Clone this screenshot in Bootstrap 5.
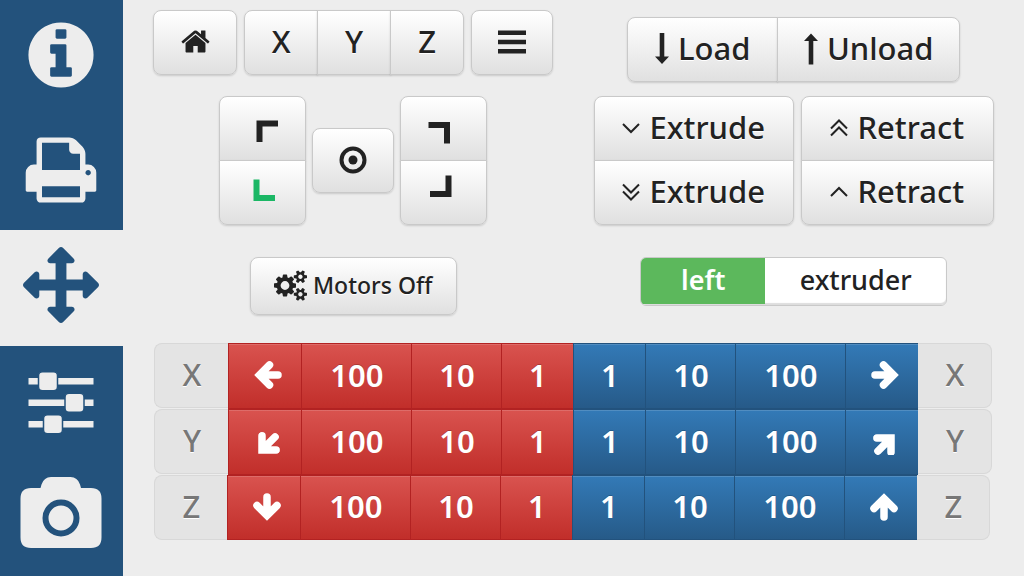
<!DOCTYPE html>
<html lang="en">
<head>
<meta charset="utf-8">
<meta name="viewport" content="width=device-width, initial-scale=1">
<title>Printer control</title>
<link href="https://cdn.jsdelivr.net/npm/bootstrap@5.3.0/dist/css/bootstrap.min.css" rel="stylesheet">
<style>
  body { background: #ededed; color: #222; font-family: "Noto Sans", sans-serif; }
  svg { display: block; flex: none; fill: currentColor; }

  /* side navigation */
  .side-nav { width: 12%; background: #23527c; }
  .side-nav a { flex: 1 1 0; color: #ededed; padding-bottom: 6px; }
  .side-nav a.active { background: #ededed; color: #23527c; }

  .panel { padding: 10px 10px 0; }
  .upper { min-height: 333px; }
  .left-stack > * + * { margin-top: 32px; }
  .left-stack > .corners { margin-top: 21px; }
  .right-stack { padding-top: 7px; }
  .right-stack > * + * { margin-top: 32px; }
  .right-stack > .feed { margin-top: 14px; }
  .gap-6 { gap: 6px; }
  .gap-7 { gap: 7px; }

  /* light gradient buttons */
  .pad {
    --bs-btn-border-radius: 8px;
    --bs-btn-border-color: #c9c9c9;
    --bs-btn-hover-border-color: #bbb;
    --bs-btn-color: #222;
    --bs-btn-font-size: 31px;
    --bs-btn-line-height: 1;
    --bs-btn-padding-x: 0;
    --bs-btn-padding-y: 0;
    display: inline-flex; align-items: center; justify-content: center;
    height: 65px; padding-bottom: 2px; font-weight: 500;
    background: linear-gradient(#fff, #e0e0e0);
    text-shadow: 0 1px 0 #fff;
    box-shadow: 0 1px 2px rgba(0, 0, 0, .15);
  }
  .w-key { width: 82px; }
  .w-home { width: 84px; }
  .w-axis { min-width: 74px; }
  .w-corner { width: 87px; }
  .w-extrude { width: 200px; }
  .w-retract { width: 193px; }
  .w-load { width: 151px; }
  .w-unload { width: 183px; }
  .word { gap: 9px; }
  .motors { height: 58px; width: 207px; font-size: 23px; gap: 6px; }
  .done { color: #1bb765; }

  /* extruder switch */
  .switcher {
    width: 307px; height: 49px; border: 1px solid #c9c9c9; border-radius: 6px;
    background: #fff; overflow: hidden; font-size: 27px; line-height: 44px; font-weight: 500;
    box-shadow: inset 0 -2px 1px #ddd; cursor: pointer;
  }
  .switcher .on { width: 124px; height: 46px; background: #5cb85c; color: #fff; font-weight: 600; }

  /* jog rows */
  .jog { width: 838px; max-width: 100%; margin: 0 auto; }
  .jog .pad { height: 66px; border-radius: 0; box-shadow: inset 0 1px 0 rgba(255, 255, 255, .15); }
  .jog .neg, .jog .pos { color: #fff; font-weight: 600; border-right-width: 0; }
  .jog .neg {
    --bs-btn-border-color: #b22222;
    background: linear-gradient(#d9534f, #c12e2a); text-shadow: 0 -1px 0 rgba(0, 0, 0, .2);
  }
  .jog .pos {
    --bs-btn-border-color: #22527d;
    background: linear-gradient(#337ab7, #265a88); text-shadow: 0 -1px 0 rgba(0, 0, 0, .2);
  }
  .jog .axis-tag {
    --bs-btn-disabled-color: #777; --bs-btn-disabled-border-color: #d8d8d8; --bs-btn-disabled-opacity: 1;
    width: 74px; height: 65px; background: #e4e4e4; box-shadow: none;
  }
  .jog .axis-tag:first-child { border-radius: 8px 0 0 8px; border-right: 0; }
  .jog .axis-tag:last-child { border-radius: 0 8px 8px 0; border-left: 0; }
  .jog .short .axis-tag { width: 73px; }
  .jog .short .pad { height: 65px; }
  .jog .s-dir { width: 73px; padding-left: 5px; }
  .s-100 { width: 110px; }
  .s-10 { width: 90px; }
  .s-1 { width: 72px; }
</style>
</head>
<body>
<svg width="0" height="0" class="position-absolute" aria-hidden="true">
  <symbol id="arrow" viewBox="0 0 28 28">
    <path d="M15.500 4L5.500 14l10 10M7 14h17" fill="none" stroke="currentColor" stroke-width="7.500" stroke-linecap="round"/>
  </symbol>
  <symbol id="chevron" viewBox="0 0 18 18"><path d="M1 5l8 8 8-8" fill="none" stroke="currentColor" stroke-width="2"/></symbol>
  <symbol id="chevrons" viewBox="0 0 18 18"><path d="M1 1.500l8 8 8-8M1 8.500l8 8 8-8" fill="none" stroke="currentColor" stroke-width="2"/></symbol>
</svg>

<div class="d-flex min-vh-100">
  <nav class="side-nav d-flex flex-column flex-shrink-0" aria-label="Main">
    <a href="#info" aria-label="Info" class="d-flex align-items-center justify-content-center">
      <svg width="76" height="76" viewBox="0 0 1792 1792"><path d="M1152 1376v-160q0-14-9-23t-23-9h-96v-512q0-14-9-23t-23-9h-320q-14 0-23 9t-9 23v160q0 14 9 23t23 9h96v320h-96q-14 0-23 9t-9 23v160q0 14 9 23t23 9h448q14 0 23-9t9-23zm-128-896v-160q0-14-9-23t-23-9h-192q-14 0-23 9t-9 23v160q0 14 9 23t23 9h192q14 0 23-9t9-23zm640 416q0 209-103 385.500t-279.500 279.500-385.500 103-385.500-103-279.500-279.500-103-385.500 103-385.500 279.500-279.500 385.500-103 385.500 103 279.500 279.500 103 385.500z"/></svg>
    </a>
    <a href="#print" aria-label="Print" class="d-flex align-items-center justify-content-center">
      <svg width="76" height="76" viewBox="0 0 1792 1792"><path d="M448 1536h896v-256h-896v256zm0-640h896v-384h-160q-40 0-68-28t-28-68v-160h-640v640zm1152 64q0-26-19-45t-45-19-45 19-19 45 19 45 45 19 45-19 19-45zm128 0v416q0 13-9.500 22.500t-22.500 9.500h-224v160q0 40-28 68t-68 28h-960q-40 0-68-28t-28-68v-160h-224q-13 0-22.500-9.500t-9.500-22.500v-416q0-79 56.500-135.500t135.500-56.500h64v-544q0-40 28-68t68-28h672q40 0 88 20t76 48l152 152q28 28 48 76t20 88v256h64q79 0 135.500 56.500t56.500 135.500z"/></svg>
    </a>
    <a href="#move" aria-label="Move" aria-current="page" class="active d-flex align-items-center justify-content-center">
      <svg width="76" height="76" viewBox="0 0 1792 1792"><path d="M1792 896q0 26-19 45l-256 256q-19 19-45 19t-45-19-19-45v-128h-384v384h128q26 0 45 19t19 45-19 45l-256 256q-19 19-45 19t-45-19l-256-256q-19-19-19-45t19-45 45-19h128v-384h-384v128q0 26-19 45t-45 19-45-19l-256-256q-19-19-19-45t19-45l256-256q19-19 45-19t45 19 19 45v128h384v-384h-128q-26 0-45-19t-19-45 19-45l256-256q19-19 45-19t45 19l256 256q19 19 19 45t-19 45-45 19h-128v384h384v-128q0-26 19-45t45-19 45 19l256 256q19 19 19 45z"/></svg>
    </a>
    <a href="#settings" aria-label="Settings" class="d-flex align-items-center justify-content-center">
      <svg width="76" height="76" viewBox="0 0 76 76"><path d="M5.500 16h65v6.500h-65zM5.500 37.500h65V44h-65zM5.500 59h65v6.500h-65z"/><g stroke="#23527c" stroke-width="1.500"><rect x="15.500" y="9.800" width="19" height="19" rx="4"/><rect x="42" y="31.300" width="19" height="19" rx="4"/><rect x="20.500" y="52.800" width="19" height="19" rx="4"/></g></svg>
    </a>
    <a href="#camera" aria-label="Camera" class="d-flex align-items-center justify-content-center">
      <svg width="82" height="76" viewBox="-3 0 82 76"><path d="M8 11h9.500l1-3.500Q21 0 28 0h19.500q7 0 9.500 7.500l1 3.500h10q10.500 0 10.500 10.500v39Q78.500 71 68 71H8Q-2.500 71-2.500 60.500v-39Q-2.500 11 8 11z"/><circle cx="38" cy="41" r="15.500" fill="none" stroke="#23527c" stroke-width="6"/></svg>
    </a>
  </nav>

  <main class="panel flex-grow-1">
    <div class="row g-0 upper">
      <div class="col-6 left-stack d-flex flex-column align-items-center">
        <div class="d-flex gap-7">
          <button type="button" class="btn pad w-home" aria-label="Home all">
            <svg width="31" height="31" viewBox="0 0 1792 1792"><path d="M1472 992v480q0 26-19 45t-45 19h-384v-384h-256v384h-384q-26 0-45-19t-19-45v-480q0-1 .5-3t.5-3l575-474 575 474q1 2 1 6zm223-69l-62 74q-8 9-21 11h-3q-13 0-21-7l-692-577-692 577q-12 8-24 7-13-2-21-11l-62-74q-8-10-7-23.500t11-21.500l719-599q32-26 76-26t76 26l244 204v-195q0-14 9-23t23-9h192q14 0 23 9t9 23v408l219 182q10 8 11 21.500t-7 23.500z"/></svg>
          </button>
          <div class="btn-group" role="group" aria-label="Home axis">
            <button type="button" class="btn pad w-axis">X</button>
            <button type="button" class="btn pad w-axis">Y</button>
            <button type="button" class="btn pad w-axis">Z</button>
          </div>
          <button type="button" class="btn pad w-key" aria-label="Menu">
            <svg width="28" height="28" viewBox="0 0 28 28"><path d="M0 2.500h28V7H0zM0 11.700h28v4.500H0zM0 21h28v4.500H0z"/></svg>
          </button>
        </div>

        <div class="corners d-flex gap-6 align-items-center">
          <div class="btn-group-vertical w-corner" role="group" aria-label="Left corners">
            <button type="button" class="btn pad" aria-label="Back left"><svg width="40" height="40" viewBox="-4 -4 40 40"><path d="M9.500 8.500H31v6H15.500V30h-6z"/></svg></button>
            <button type="button" class="btn pad done" aria-label="Front left"><svg width="40" height="40" viewBox="-4 -4 40 40"><path d="M6.500 3.500h6V19H28v6H6.500z"/></svg></button>
          </div>
          <button type="button" class="btn pad w-key" aria-label="Centre"><svg width="28" height="28" viewBox="0 0 28 28"><circle cx="14" cy="14" r="11.500" fill="none" stroke="currentColor" stroke-width="4"/><circle cx="14" cy="14" r="4.500"/></svg></button>
          <div class="btn-group-vertical w-corner" role="group" aria-label="Right corners">
            <button type="button" class="btn pad" aria-label="Back right"><svg width="40" height="40" viewBox="-4 -4 40 40"><path d="M.5 10H22v21.500h-6V16H.5z"/></svg></button>
            <button type="button" class="btn pad" aria-label="Front right"><svg width="40" height="40" viewBox="-4 -4 40 40"><path d="M17.500-.5h6V21H2v-6h15.500z"/></svg></button>
          </div>
        </div>

        <button type="button" class="btn pad motors">
          <svg width="33" height="31" viewBox="-64 0 1920 1792"><path d="M832 896q0-106-75-181t-181-75-181 75-75 181 75 181 181 75 181-75 75-181zm768 512q0-52-38-90t-90-38-90 38-38 90q0 53 37.500 90.500t90.500 37.500 90.500-37.500 37.500-90.500zm0-1024q0-52-38-90t-90-38-90 38-38 90q0 53 37.500 90.500t90.500 37.500 90.500-37.500 37.500-90.500zm-384 421v185q0 10-7 19.500t-16 10.500l-155 24q-11 35-32 76 34 48 90 115 7 11 7 20 0 12-7 19-23 30-82.500 89.500t-78.500 59.500q-11 0-21-7l-115-90q-37 19-77 31-11 108-23 155-7 24-30 24h-186q-11 0-20-7.500t-10-17.500l-23-153q-34-10-75-31l-118 89q-7 7-20 7-11 0-21-8-144-133-144-160 0-9 7-19 10-14 41-53t47-61q-23-44-35-82l-152-24q-10-1-17-9.500t-7-19.500v-185q0-10 7-19.500t16-10.500l155-24q11-35 32-76-34-48-90-115-7-11-7-20 0-12 7-20 22-30 82-89t79-59q11 0 21 7l115 90q34-18 77-32 11-108 23-154 7-24 30-24h186q11 0 20 7.500t10 17.500l23 153q34 10 75 31l118-89q8-7 20-7 11 0 21 8 144 133 144 160 0 8-7 19-12 16-42 54t-45 60q23 48 34 82l152 23q10 2 17 10.500t7 19.500zm640 533v140q0 16-149 31-12 27-30 52 51 113 51 138 0 4-4 7-122 71-124 71-8 0-46-47t-52-68q-20 2-30 2t-30-2q-14 21-52 68t-46 47q-2 0-124-71-4-3-4-7 0-25 51-138-18-25-30-52-149-15-149-31v-140q0-16 149-31 13-29 30-52-51-113-51-138 0-4 4-7 4-2 35-20t59-34 30-16q8 0 46 46.500t52 67.500q20-2 30-2t30 2q51-71 92-112l6-2q4 0 124 70 4 3 4 7 0 25-51 138 17 23 30 52 149 15 149 31zm0-1024v140q0 16-149 31-12 27-30 52 51 113 51 138 0 4-4 7-122 71-124 71-8 0-46-47t-52-68q-20 2-30 2t-30-2q-14 21-52 68t-46 47q-2 0-124-71-4-3-4-7 0-25 51-138-18-25-30-52-149-15-149-31v-140q0-16 149-31 13-29 30-52-51-113-51-138 0-4 4-7 4-2 35-20t59-34 30-16q8 0 46 46.500t52 67.500q20-2 30-2t30 2q51-71 92-112l6-2q4 0 124 70 4 3 4 7 0 25-51 138 17 23 30 52 149 15 149 31z"/></svg>
          Motors Off
        </button>
      </div>

      <div class="col-6 right-stack d-flex flex-column align-items-center">
        <div class="btn-group" role="group" aria-label="Filament">
          <button type="button" class="btn pad word w-load"><svg width="14" height="32" viewBox="0 0 14 32"><path d="M4.700 0h4.600v23.500H14L7 31 0 23.500h4.700z"/></svg>Load</button>
          <button type="button" class="btn pad word w-unload"><svg width="14" height="32" viewBox="0 0 14 32"><path d="M4.700 31.500h4.600V8H14L7 .5 0 8h4.700z"/></svg>Unload</button>
        </div>

        <div class="feed d-flex gap-7">
          <div class="btn-group-vertical w-extrude" role="group" aria-label="Extrude">
            <button type="button" class="btn pad word"><svg width="18" height="18"><use href="#chevron"/></svg>Extrude</button>
            <button type="button" class="btn pad word"><svg width="18" height="18"><use href="#chevrons"/></svg>Extrude</button>
          </div>
          <div class="btn-group-vertical w-retract" role="group" aria-label="Retract">
            <button type="button" class="btn pad word"><svg width="18" height="18"><use href="#chevrons" transform="rotate(180 9 9)"/></svg>Retract</button>
            <button type="button" class="btn pad word"><svg width="18" height="18"><use href="#chevron" transform="rotate(180 9 9)"/></svg>Retract</button>
          </div>
        </div>

        <div>
          <input type="checkbox" class="btn-check" id="extruder" role="switch" checked>
          <label class="switcher d-flex text-center" for="extruder"><span class="on">left</span><span class="flex-grow-1">extruder</span></label>
        </div>
      </div>
    </div>

    <div class="jog">
      <div class="d-flex" role="group" aria-label="Move X">
        <button type="button" class="btn pad axis-tag" disabled>X</button>
        <button type="button" class="btn pad neg s-dir" aria-label="X minus"><svg width="28" height="28"><use href="#arrow"/></svg></button>
        <button type="button" class="btn pad neg s-100">100</button>
        <button type="button" class="btn pad neg s-10">10</button>
        <button type="button" class="btn pad neg s-1">1</button>
        <button type="button" class="btn pad pos s-1">1</button>
        <button type="button" class="btn pad pos s-10">10</button>
        <button type="button" class="btn pad pos s-100">100</button>
        <button type="button" class="btn pad pos s-dir" aria-label="X plus"><svg width="28" height="28"><use href="#arrow" transform="rotate(180 14 14)"/></svg></button>
        <button type="button" class="btn pad axis-tag" disabled>X</button>
      </div>
      <div class="d-flex" role="group" aria-label="Move Y">
        <button type="button" class="btn pad axis-tag" disabled>Y</button>
        <button type="button" class="btn pad neg s-dir" aria-label="Y minus"><svg width="28" height="28"><use href="#arrow" transform="translate(0 3) rotate(-45 14 14)"/></svg></button>
        <button type="button" class="btn pad neg s-100">100</button>
        <button type="button" class="btn pad neg s-10">10</button>
        <button type="button" class="btn pad neg s-1">1</button>
        <button type="button" class="btn pad pos s-1">1</button>
        <button type="button" class="btn pad pos s-10">10</button>
        <button type="button" class="btn pad pos s-100">100</button>
        <button type="button" class="btn pad pos s-dir" aria-label="Y plus"><svg width="28" height="28"><use href="#arrow" transform="translate(0 3) rotate(135 14 14)"/></svg></button>
        <button type="button" class="btn pad axis-tag" disabled>Y</button>
      </div>
      <div class="d-flex short" role="group" aria-label="Move Z">
        <button type="button" class="btn pad axis-tag" disabled>Z</button>
        <button type="button" class="btn pad neg s-dir" aria-label="Z minus"><svg width="28" height="28"><use href="#arrow" transform="rotate(-90 14 14)"/></svg></button>
        <button type="button" class="btn pad neg s-100">100</button>
        <button type="button" class="btn pad neg s-10">10</button>
        <button type="button" class="btn pad neg s-1">1</button>
        <button type="button" class="btn pad pos s-1">1</button>
        <button type="button" class="btn pad pos s-10">10</button>
        <button type="button" class="btn pad pos s-100">100</button>
        <button type="button" class="btn pad pos s-dir" aria-label="Z plus"><svg width="28" height="28"><use href="#arrow" transform="rotate(90 14 14)"/></svg></button>
        <button type="button" class="btn pad axis-tag" disabled>Z</button>
      </div>
    </div>
  </main>
</div>
<script src="https://cdn.jsdelivr.net/npm/bootstrap@5.3.0/dist/js/bootstrap.bundle.min.js"></script>
</body>
</html>
